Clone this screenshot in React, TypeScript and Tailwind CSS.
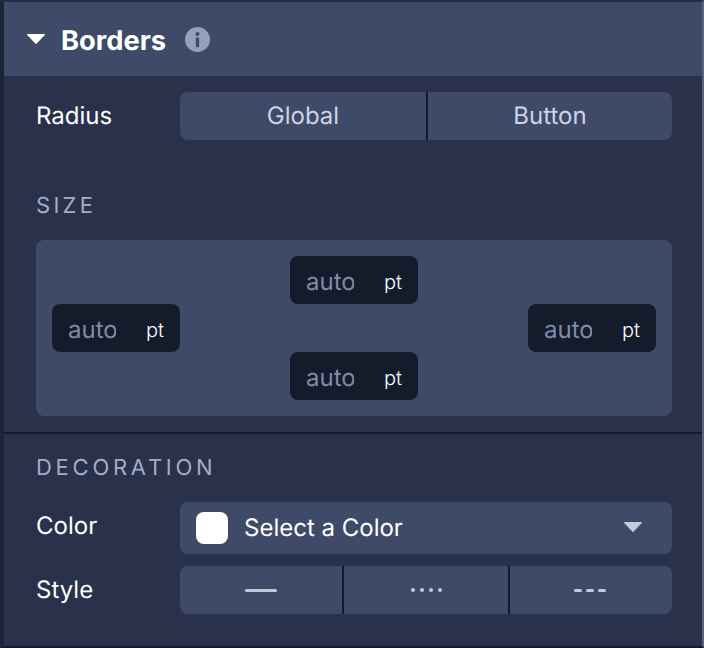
function SizeInput({ className = "" }: { className?: string }) {
  return (
    <div className={`flex h-12 w-32 items-center justify-between rounded-lg bg-[#141c2c] px-4 pt-[3px] ${className}`}>
      <span className="w-12 overflow-hidden text-[24px] leading-[30px] text-[#818ba6]">auto</span>
      <span className="text-[20px] font-light leading-[26px] text-white">pt</span>
    </div>
  );
}

function Triangle({ className }: { className: string }) {
  return (
    <svg viewBox="0 0 18 10" className={className} fill="currentColor">
      <path d="M0.6 0H17.4C17.9 0 18.1 0.5 17.8 0.9L9.5 9.8C9.2 10.1 8.8 10.1 8.5 9.8L0.2 0.9C-0.1 0.5 0.1 0 0.6 0Z" />
    </svg>
  );
}

export default function App() {
  return (
    <div className="h-[648px] w-[704px] overflow-hidden border-y-2 border-r-2 border-l-4 border-t-[#252d45] border-r-[#5b6379] border-b-[#141c2c] border-l-[#1c2438] bg-[#2a314a] font-['Inter',sans-serif] [text-rendering:geometricPrecision]">
      <div className="flex h-[74px] items-center bg-[#3e4a68] pl-[23px]">
        <Triangle className="h-[10px] w-[18px] text-white" />
        <span className="ml-[16px] pt-[3px] text-[27.3px] font-bold leading-none text-white">Borders</span>
        <svg viewBox="0 0 24 24" className="ml-[19px] h-[25px] w-[25px]">
          <circle cx="12" cy="12" r="12" fill="#959fbe" />
          <circle cx="12" cy="6.8" r="1.9" fill="#3e4a68" />
          <rect x="10.4" y="10" width="3.2" height="9.5" rx="0.8" fill="#3e4a68" />
        </svg>
      </div>

      <div className="flex items-center pr-[30px] pl-[32px] pt-4">
        <span className="w-[144px] text-[24px] leading-none text-white">Radius</span>
        <div className="flex h-12 flex-1 overflow-hidden rounded-lg bg-[#3e4a68] text-[24px] text-[#ccd4e6]">
          <div className="flex w-[248px] items-center justify-center border-r-2 border-[#141c2c]">Global</div>
          <div className="flex flex-1 items-center justify-center">Button</div>
        </div>
      </div>

      <div className="pl-[32px] pt-[55px] text-[22px] leading-none tracking-[0.15em] text-[#a3adc6]">SIZE</div>

      <div className="mt-[23px] ml-[32px] mr-[30px] grid h-[176px] grid-cols-[128px_1fr_128px_1fr_128px] grid-rows-[48px_48px_48px] content-center rounded-lg bg-[#3e4a68] px-4">
        <SizeInput className="col-start-3 row-start-1" />
        <SizeInput className="col-start-1 row-start-2" />
        <SizeInput className="col-start-5 row-start-2" />
        <SizeInput className="col-start-3 row-start-3" />
      </div>

      <div className="mt-4 h-[2px] bg-[#141c2c]" />

      <div className="pl-[32px] pt-[23px] text-[22px] leading-none tracking-[0.17em] text-[#a3adc6]">DECORATION</div>

      <div className="flex items-center pr-[30px] pl-[32px] pt-[23px]">
        <span className="w-[144px] pb-1 text-[24px] leading-none text-white">Color</span>
        <div className="flex h-[52px] flex-1 items-center rounded-lg bg-[#3e4a68] pr-[30px] pl-4">
          <div className="h-8 w-8 rounded-lg bg-white" />
          <span className="ml-4 flex-1 text-[24px] leading-none text-white">Select a Color</span>
          <Triangle className="mb-[3px] h-[10px] w-[18px] text-[#c5cbdc]" />
        </div>
      </div>

      <div className="flex items-center pr-[30px] pl-[32px] pt-3">
        <span className="w-[144px] text-[24px] leading-none text-white">Style</span>
        <div className="flex h-12 flex-1 overflow-hidden rounded-lg bg-[#3e4a68]">
          <div className="flex w-[164px] items-center justify-center border-r-2 border-[#141c2c]">
            <span className="h-[3px] w-8 rounded-full bg-[#c2c9da]" />
          </div>
          <div className="flex w-[166px] items-center justify-center gap-[5px] border-r-2 border-[#141c2c]">
            <span className="h-1 w-1 rounded-full bg-[#c2c9da]" />
            <span className="h-1 w-1 rounded-full bg-[#c2c9da]" />
            <span className="h-1 w-1 rounded-full bg-[#c2c9da]" />
            <span className="h-1 w-1 rounded-full bg-[#c2c9da]" />
          </div>
          <div className="flex flex-1 items-center justify-center gap-1 pr-[2px]">
            <span className="h-[3px] w-2 rounded-full bg-[#c2c9da]" />
            <span className="h-[3px] w-2 rounded-full bg-[#c2c9da]" />
            <span className="h-[3px] w-2 rounded-full bg-[#c2c9da]" />
          </div>
        </div>
      </div>
    </div>
  );
}
